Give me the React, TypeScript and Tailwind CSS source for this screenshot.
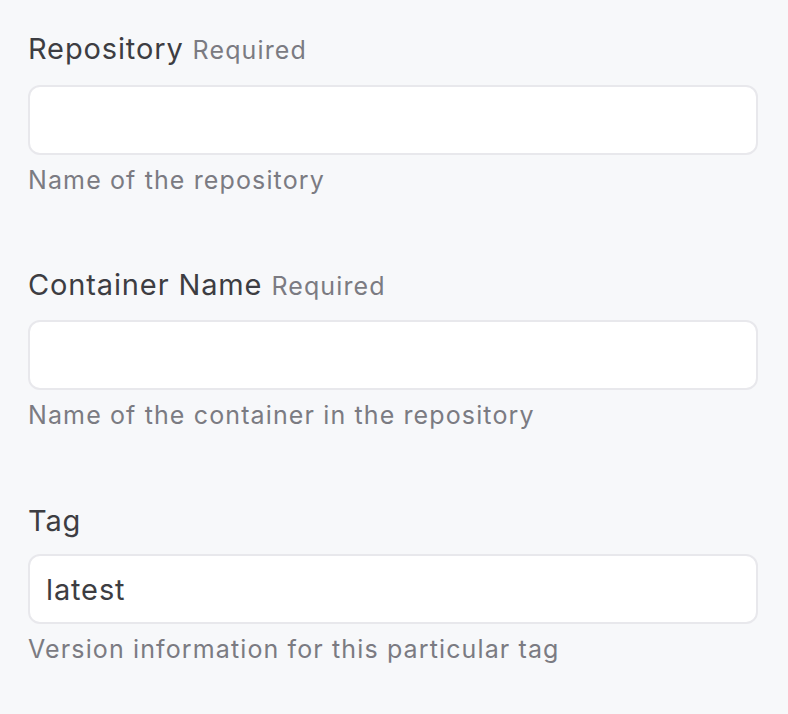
const fields = [
  { label: "Repository", required: true, value: "", help: "Name of the repository" },
  { label: "Container Name", required: true, value: "", help: "Name of the container in the repository" },
  { label: "Tag", required: false, value: "latest", help: "Version information for this particular tag" },
];

export default function App() {
  return (
    <div className="min-h-[714px] w-[788px] bg-[#f7f8fa] pl-[28px] pt-[32px] font-['Inter','Liberation_Sans',sans-serif]">
      <div className="flex flex-col gap-[73px]">
        {fields.map((f) => (
          <div key={f.label} className="flex flex-col">
            <div className={f.required ? "flex items-baseline gap-[9px]" : "flex items-baseline gap-[9px] pt-[1px] pb-[1px]"}>
              <span className="text-[29px] leading-[34px] tracking-[0.03em] text-[#3d3d42]">{f.label}</span>
              {f.required && (
                <span className="text-[25px] tracking-[0.045em] text-[#7b7b82]">Required</span>
              )}
            </div>
            <input
              readOnly
              value={f.value}
              className="mt-[15px] h-[70px] w-[730px] rounded-[12px] border-2 border-[#e8e8ec] bg-white px-[16px] text-[29px] tracking-[0.03em] text-[#3d3d42] outline-none"
            />
            <p className="mt-[10px] text-[25px] leading-[30px] tracking-[0.045em] text-[#7b7b82]">{f.help}</p>
          </div>
        ))}
      </div>
    </div>
  );
}
